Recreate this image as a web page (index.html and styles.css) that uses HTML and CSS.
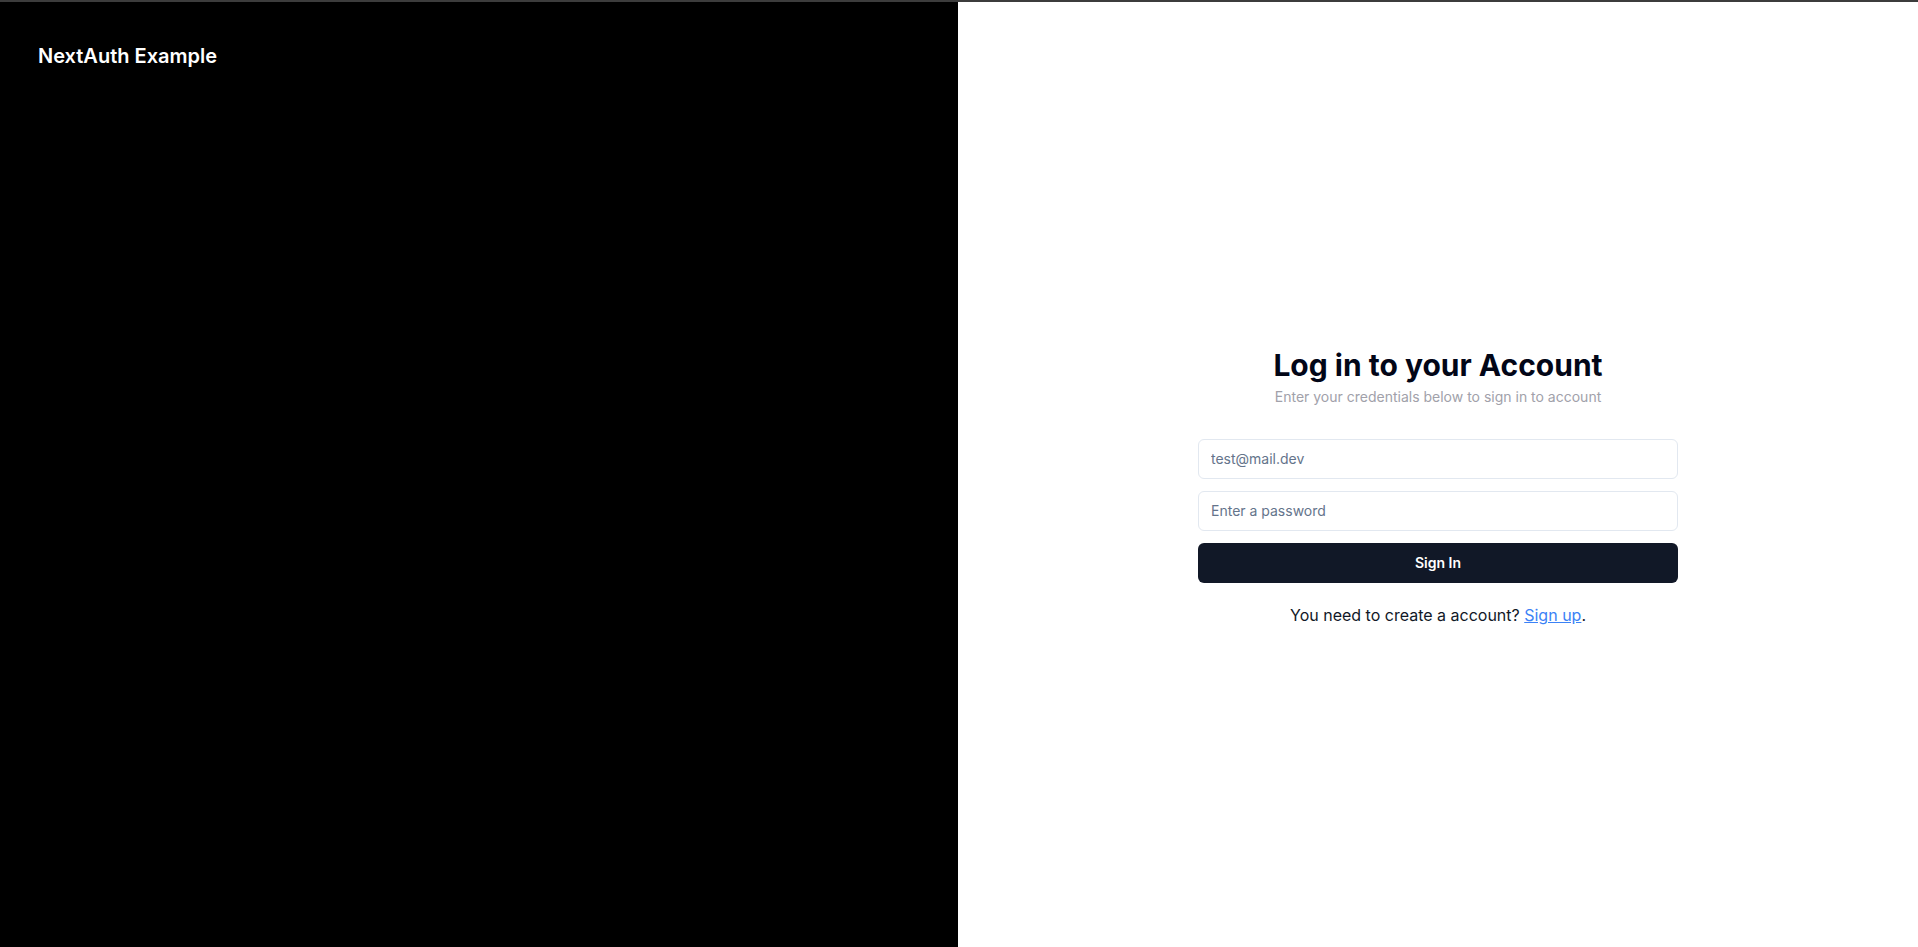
FILE: index.html
```html
<!DOCTYPE html>
<html lang="en">
<head>
<meta charset="utf-8">
<title>Login</title>
<link rel="stylesheet" href="styles.css">
</head>
<body>
<div class="page">
  <aside class="brand-panel">
    <div class="brand">NextAuth Example</div>
  </aside>
  <main class="auth-panel">
    <div class="auth-box">
      <div class="auth-header">
        <h1 class="auth-title">Log in to your Account</h1>
        <p class="auth-subtitle">Enter your credentials below to sign in to account</p>
      </div>
      <form class="auth-form">
        <input class="field" type="email" placeholder="test@mail.dev">
        <input class="field" type="password" placeholder="Enter a password">
        <button class="submit" type="button">Sign In</button>
      </form>
      <p class="auth-footer">You need to create a account? <a href="#" class="link">Sign up</a>.</p>
    </div>
  </main>
</div>
</body>
</html>
```

FILE: styles.css
```css
* { box-sizing: border-box; }
html, body { margin: 0; height: 100%; }
body {
  font-family: Inter, "Noto Sans", sans-serif;
  border-top: 2px solid #3c3c3c;
  background: #fff;
}
.page {
  display: grid;
  grid-template-columns: 958px 1fr;
  height: calc(100vh - 2px);
}
.brand-panel {
  background: #000;
  color: #fff;
  padding: 40px 38px;
}
.brand {
  font-size: 20px;
  line-height: 28px;
  font-weight: 600;
}
.auth-panel {
  display: flex;
  align-items: center;
  justify-content: center;
}
.auth-box {
  width: 480px;
  display: flex;
  flex-direction: column;
  align-items: stretch;
  margin-top: 24px;
}
.auth-header {
  text-align: center;
  margin-bottom: 32px;
}
.auth-title {
  margin: 0;
  font-size: 30px;
  line-height: 36px;
  font-weight: 700;
  color: #020617;
}
.auth-subtitle {
  margin: 4px 0 0;
  font-size: 14px;
  line-height: 20px;
  color: #a1a1aa;
}
.auth-form {
  display: flex;
  flex-direction: column;
  gap: 12px;
}
.field {
  height: 40px;
  border: 1px solid #e2e8f0;
  border-radius: 6px;
  padding: 0 12px;
  font-family: inherit;
  font-size: 14px;
  color: #0f172a;
  background: #fff;
  outline: none;
}
.field::placeholder { color: #64748b; }
.submit {
  height: 40px;
  border: 0;
  border-radius: 6px;
  background: #111827;
  color: #fff;
  font-family: inherit;
  font-size: 14px;
  font-weight: 600;
}
.auth-footer {
  margin: 20px 0 0;
  text-align: center;
  font-size: 16px;
  line-height: 24px;
  color: #111827;
}
.link {
  color: #3b82f6;
  text-decoration: underline;
}
```
